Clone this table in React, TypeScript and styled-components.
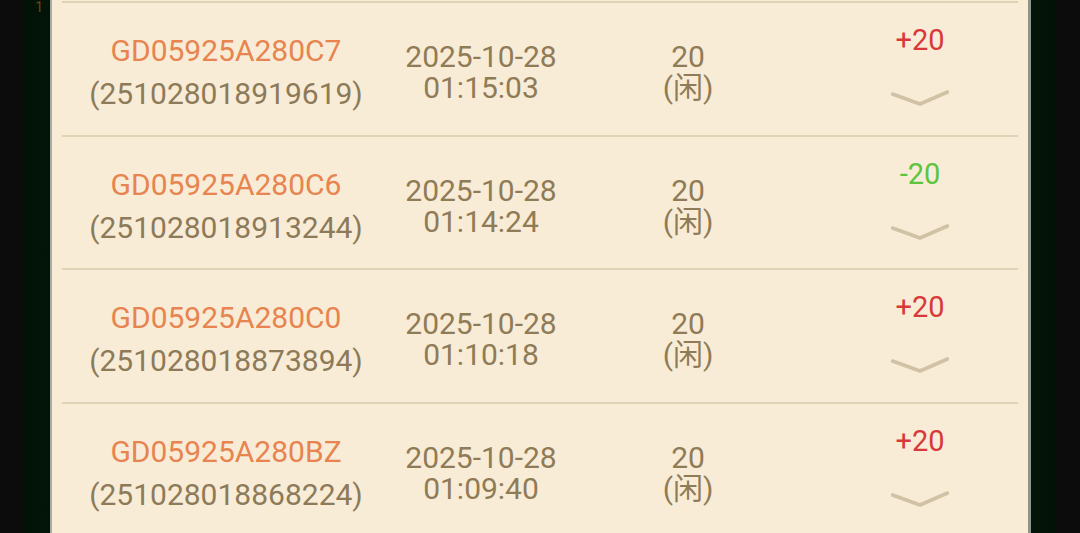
import styled, { createGlobalStyle } from "styled-components";

interface Record {
  code: string;
  orderNo: string;
  date: string;
  time: string;
  bet: number;
  side: string;
  result: number;
}

const records: Record[] = [
  { code: "GD05925A280C7", orderNo: "251028018919619", date: "2025-10-28", time: "01:15:03", bet: 20, side: "闲", result: 20 },
  { code: "GD05925A280C6", orderNo: "251028018913244", date: "2025-10-28", time: "01:14:24", bet: 20, side: "闲", result: -20 },
  { code: "GD05925A280C0", orderNo: "251028018873894", date: "2025-10-28", time: "01:10:18", bet: 20, side: "闲", result: 20 },
  { code: "GD05925A280BZ", orderNo: "251028018868224", date: "2025-10-28", time: "01:09:40", bet: 20, side: "闲", result: 20 },
];

const GlobalStyle = createGlobalStyle`
  html, body {
    margin: 0;
    padding: 0;
    background: #0b0b0b;
    overflow: hidden;
  }
  body {
    font-family: Roboto, "Noto Sans CJK SC", "Noto Sans", sans-serif;
  }
`;

const Screen = styled.div`
  display: flex;
  width: 1080px;
  height: 533px;
  overflow: hidden;
`;

const Gutter = styled.div<{ $side: "left" | "right" }>`
  width: ${({ $side }) => ($side === "left" ? "50px" : "49px")};
  flex-shrink: 0;
  background: ${({ $side }) =>
    $side === "left"
      ? "linear-gradient(to right, #0c0c0c 0, #0c0c0c 24px, #021206 24px, #031408 100%)"
      : "linear-gradient(to right, #031408 0, #021206 24px, #0c0c0c 24px, #0c0c0c 100%)"};
  color: #6a4a12;
  font-size: 14px;
  line-height: 14px;
  text-align: right;
  padding-right: ${({ $side }) => ($side === "left" ? "7px" : "0")};
  box-sizing: border-box;
`;

const Panel = styled.div`
  flex: 1;
  background: #f8ecd7;
  border-left: 2px solid #a7aca4;
  border-right: 3px solid #8e948c;
  padding: 1px 10px 0;
  box-sizing: border-box;
`;

const Row = styled.div`
  display: grid;
  grid-template-columns: 328px 182px 232px 214px;
  height: 133.5px;
  border-top: 2px solid #e0d2b4;
  box-sizing: border-box;
`;

const Cell = styled.div`
  display: flex;
  flex-direction: column;
  align-items: center;
  justify-content: center;
  padding-top: 7px;
  white-space: nowrap;
`;

const Code = styled.span`
  font-size: 30px;
  line-height: 43px;
  color: #e7844f;
`;

const OrderNo = styled.span`
  font-size: 30px;
  line-height: 43px;
  color: #8d7a58;
`;

const Stacked = styled.span`
  font-size: 30px;
  line-height: 31px;
  text-align: center;
  color: #8f7b56;
`;

const ResultCell = styled.div`
  display: flex;
  flex-direction: column;
  align-items: center;
  padding: 22px 0 0 18px;
`;

const Result = styled.span<{ $win: boolean }>`
  font-size: 29px;
  line-height: 30px;
  color: ${({ $win }) => ($win ? "#d7393b" : "#5cc43d")};
`;

const Chevron = styled.svg`
  margin-top: 35px;
  width: 58px;
  height: 16px;
`;

const ExpandIcon = () => (
  <Chevron viewBox="0 0 58 16" fill="none">
    <polyline
      points="1.5,4 29,14 56.5,2"
      stroke="#d1c2a6"
      strokeWidth="3.6"
      strokeLinecap="round"
      strokeLinejoin="round"
    />
  </Chevron>
);

const App = () => {
  return (
    <>
      <GlobalStyle />
      <Screen>
        <Gutter $side="left">1</Gutter>
        <Panel>
          {records.map((r) => (
            <Row key={r.code}>
              <Cell>
                <Code>{r.code}</Code>
                <OrderNo>({r.orderNo})</OrderNo>
              </Cell>
              <Cell>
                <Stacked>
                  {r.date}
                  <br />
                  {r.time}
                </Stacked>
              </Cell>
              <Cell>
                <Stacked>
                  {r.bet}
                  <br />({r.side})
                </Stacked>
              </Cell>
              <ResultCell>
                <Result $win={r.result > 0}>
                  {r.result > 0 ? `+${r.result}` : r.result}
                </Result>
                <ExpandIcon />
              </ResultCell>
            </Row>
          ))}
        </Panel>
        <Gutter $side="right" />
      </Screen>
    </>
  );
};

export default App;
